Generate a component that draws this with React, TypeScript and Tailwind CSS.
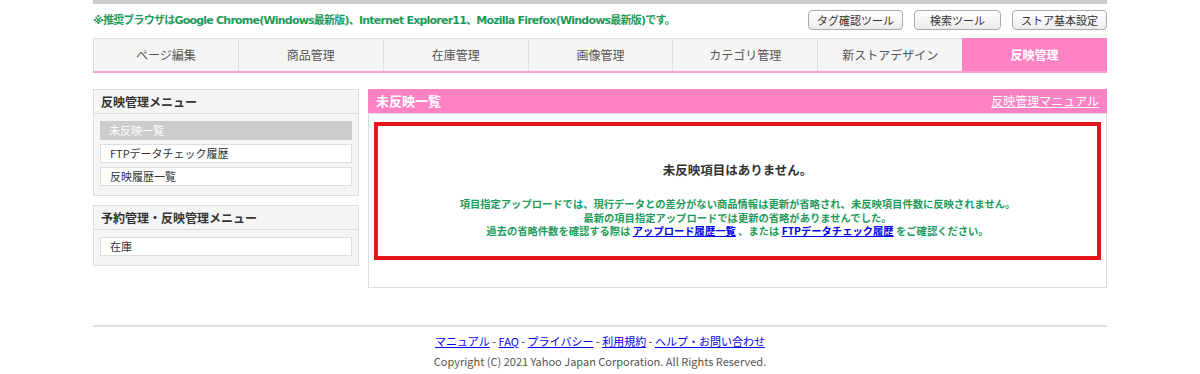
import React from 'react';

const tabs = ['ページ編集', '商品管理', '在庫管理', '画像管理', 'カテゴリ管理', '新ストアデザイン', '反映管理'];
const tools = ['タグ確認ツール', '検索ツール', 'ストア基本設定'];

const font = { fontFamily: '"DejaVu Sans", "Noto Sans CJK JP", sans-serif' };

const MenuBox: React.FC<{ title: string; items: { label: string; active?: boolean }[] }> = ({ title, items }) => (
  <div className="border border-[#dddddd] bg-[#f5f5f5]">
    <div className="h-[24px] flex items-center px-[7px] border-b border-[#dddddd] text-[12px] font-bold text-[#333]">{title}</div>
    <div className="flex flex-col gap-[4px] px-[6px] pt-[7px] pb-[9px]">
      {items.map((item) =>
        item.active ? (
          <div key={item.label} className="h-[19px] flex items-center px-[9px] bg-[#cccccc] text-[11px] text-white">
            {item.label}
          </div>
        ) : (
          <div key={item.label} className="h-[19px] flex items-center px-[9px] bg-white border border-[#dddddd] text-[11px] text-[#333]">
            {item.label}
          </div>
        )
      )}
    </div>
  </div>
);

export default function App() {
  return (
    <div className="w-[1200px] h-[374px] bg-white overflow-hidden" style={{ fontFamily: '"Noto Sans CJK JP", sans-serif' }}>
      <div className="w-[1014px] mx-auto">
        <div className="h-[4px] bg-[#cccccc]" />
        <div className="h-[34px] flex items-center justify-between">
          <p className="text-[11px] font-bold text-[#1e9b5b] tracking-[-0.78px]" style={font}>
            ※推奨ブラウザはGoogle Chrome(Windows最新版)、Internet Explorer11、Mozilla Firefox(Windows最新版)です。
          </p>
          <div className="flex gap-[11px] mb-[2px]">
            {tools.map((t, i) => (
              <button
                key={t}
                className={`h-[20px] rounded-[4px] border border-[#aaaaaa] bg-gradient-to-b from-white to-[#ececec] text-[11px] text-[#333] ${
                  i === 1 ? 'w-[87px]' : 'w-[95px]'
                }`}
              >
                {t}
              </button>
            ))}
          </div>
        </div>
        <div className="grid grid-cols-7 h-[35px] border-b-2 border-[#ff9fd3]">
          {tabs.map((t, i) => (
            <div
              key={t}
              className={`flex items-center justify-center text-[12px] ${
                i === tabs.length - 1
                  ? 'bg-[#ff82c4] text-white font-bold'
                  : 'bg-[#f5f5f5] text-[#555] border-t border-l border-[#dddddd]'
              }`}
            >
              {t}
            </div>
          ))}
        </div>

        <div className="flex gap-[9px] mt-[16px]">
          <div className="w-[266px] flex flex-col gap-[9px]">
            <MenuBox
              title="反映管理メニュー"
              items={[{ label: '未反映一覧', active: true }, { label: 'FTPデータチェック履歴' }, { label: '反映履歴一覧' }]}
            />
            <MenuBox title="予約管理・反映管理メニュー" items={[{ label: '在庫' }]} />
          </div>

          <div className="flex-1">
            <div className="h-[25px] bg-[#ff82c4] flex items-center justify-between px-[8px] border-b border-[#dddddd]">
              <span className="text-[13px] font-bold text-white">未反映一覧</span>
              <a className="text-[12px] text-white underline">反映管理マニュアル</a>
            </div>
            <div className="border border-t-0 border-[#dddddd] px-[5px] pt-[8px] pb-[27px]">
              <div className="h-[138px] border-4 border-[#e8141c] flex flex-col items-center">
                <p className="mt-[35px] text-[12.5px] leading-[18px] font-bold text-[#333]">未反映項目はありません。</p>
                <div className="mt-[18px] text-[10.3px] leading-[13.5px] font-bold text-[#1e9b5b] text-center">
                  <p>項目指定アップロードでは、現行データとの差分がない商品情報は更新が省略され、未反映項目件数に反映されません。</p>
                  <p>最新の項目指定アップロードでは更新の省略がありませんでした。</p>
                  <p>
                    過去の省略件数を確認する際は <a className="text-[#0000ee] underline">アップロード履歴一覧</a> 、または{' '}
                    <a className="text-[#0000ee] underline">FTPデータチェック履歴</a> をご確認ください。
                  </p>
                </div>
              </div>
            </div>
          </div>
        </div>

        <div className="mt-[37px] border-t-2 border-[#dddddd] pt-[4px] flex flex-col items-center">
          <div className="text-[11px] text-[#333] leading-[20px]">
            <a className="text-[#0000ee] underline">マニュアル</a> - <a className="text-[#0000ee] underline">FAQ</a> -{' '}
            <a className="text-[#0000ee] underline">プライバシー</a> - <a className="text-[#0000ee] underline">利用規約</a> -{' '}
            <a className="text-[#0000ee] underline">ヘルプ・お問い合わせ</a>
          </div>
          <p className="text-[11px] text-[#555] leading-[20px]">Copyright (C) 2021 Yahoo Japan Corporation. All Rights Reserved.</p>
        </div>
      </div>
    </div>
  );
}
